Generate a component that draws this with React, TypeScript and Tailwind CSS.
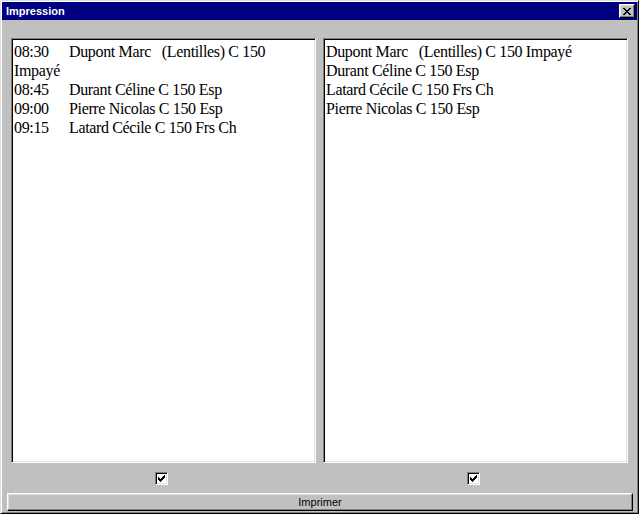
const leftRows = [
  { time: "08:30", text: "Dupont Marc   (Lentilles) C 150" },
  { time: "", text: "Impayé" },
  { time: "08:45", text: "Durant Céline C 150 Esp" },
  { time: "09:00", text: "Pierre Nicolas C 150 Esp" },
  { time: "09:15", text: "Latard Cécile C 150 Frs Ch" },
];

const rightRows = [
  "Dupont Marc   (Lentilles) C 150 Impayé",
  "Durant Céline C 150 Esp",
  "Latard Cécile C 150 Frs Ch",
  "Pierre Nicolas C 150 Esp",
];

// pixel glyphs, one string per row
const closeGlyph = ["XX....XX", ".XX..XX.", "..XXXX..", "...XX...", "..XXXX..", ".XX..XX.", "XX....XX"];
const checkGlyph = ["......X", ".....XX", "X...XXX", "XX.XXX.", "XXXXX..", ".XXX...", "..X...."];

const PixelGlyph = ({ rows }: { rows: string[] }) => (
  <svg width={rows[0].length} height={rows.length} shapeRendering="crispEdges">
    {rows.map((row, y) =>
      row.split("").map((c, x) => (c === "X" ? <rect key={`${x}-${y}`} x={x} y={y} width={1} height={1} fill="#000" /> : null))
    )}
  </svg>
);

const Checkbox = () => (
  <div className="w-[13px] h-[13px] bg-white border border-[#808080] border-r-white border-b-white shadow-[inset_1px_1px_#000,inset_-1px_-1px_#dfdfdf] flex items-center justify-center">
    <PixelGlyph rows={checkGlyph} />
  </div>
);

const ListBox = ({ children }: { children: React.ReactNode }) => (
  <div className="w-[305px] h-[425px] bg-white border border-[#808080] border-r-white border-b-white shadow-[inset_1px_1px_#000,inset_-1px_-1px_#dfdfdf] pt-[3px] px-[2px] overflow-hidden font-['Liberation_Serif','Times_New_Roman',serif] text-[16px] tracking-[-0.35px] leading-[19px] text-black">
    {children}
  </div>
);

export default function App() {
  return (
    <div className="w-[639px] h-[514px] bg-[#c0c0c0] border border-[#dfdfdf] border-r-black border-b-black shadow-[inset_1px_1px_#fff,inset_-1px_-1px_#808080] p-[1px] flex flex-col">
      <div className="h-[18px] bg-[#000080] flex items-center justify-between pl-[4px] pr-[2px]">
        <span className="font-['Liberation_Sans',Arial,sans-serif] font-bold text-[11px] text-white leading-none">Impression</span>
        <div className="w-[16px] h-[14px] bg-[#c0c0c0] border border-white border-r-black border-b-black shadow-[inset_-1px_-1px_#808080,inset_1px_1px_#dfdfdf] flex items-center justify-center pr-[1px]">
          <PixelGlyph rows={closeGlyph} />
        </div>
      </div>

      <div className="flex-1 flex flex-col pt-[18px]">
        <div className="flex gap-[7px] px-[9px]">
          <ListBox>
            {leftRows.map((r, i) => (
              <div key={i} className="whitespace-pre">
                {r.time && <span className="inline-block w-[55px]">{r.time}</span>}
                {r.text}
              </div>
            ))}
          </ListBox>
          <ListBox>
            {rightRows.map((r, i) => (
              <div key={i} className="whitespace-pre">
                {r}
              </div>
            ))}
          </ListBox>
        </div>

        <div className="flex gap-[7px] px-[9px] mt-[9px]">
          <div className="w-[305px] flex justify-center pr-[4px]">
            <Checkbox />
          </div>
          <div className="w-[305px] flex justify-center pr-[4px]">
            <Checkbox />
          </div>
        </div>

        <button className="mt-[8px] ml-[5px] w-[626px] h-[18px] bg-[#c0c0c0] border border-white border-r-black border-b-black shadow-[inset_-1px_-1px_#808080,inset_1px_1px_#dfdfdf] font-['Liberation_Sans',Arial,sans-serif] text-[11px] text-black leading-none flex items-center justify-center">
          Imprimer
        </button>
      </div>
    </div>
  );
}
